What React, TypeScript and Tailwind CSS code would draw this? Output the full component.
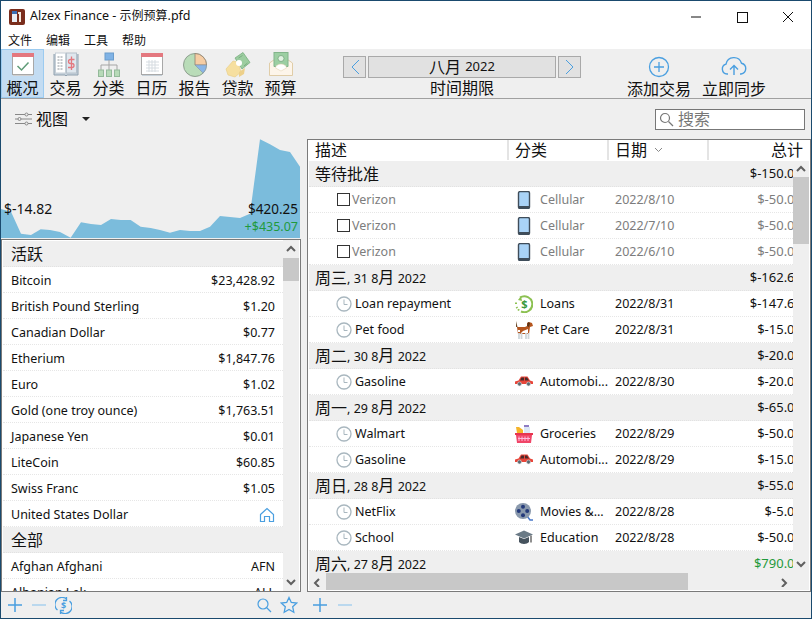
import type { ReactNode } from 'react'

const font = { fontFamily: '"Noto Sans", "Noto Sans CJK SC", sans-serif' }

function ToolIcon({ name }: { name: string }) {
  if (name === 'overview') return (
    <svg width="24" height="25" viewBox="0 0 24 25">
      <rect x="1.500" y="1.500" width="21" height="21" fill="#fff" stroke="#a8a8a8" />
      <path d="M2 23.500h20" stroke="#d0d0d0" />
      <rect x="1" y="1" width="22" height="4" fill="#e4787f" />
      <path d="M6.500 14l4 4 7-7.500" fill="none" stroke="#5f9c78" strokeWidth="1.500" />
    </svg>
  )
  if (name === 'tx') return (
    <svg width="26" height="26" viewBox="0 0 26 26">
      <path d="M1 2v21h11l1 1 1-1h11V2" fill="#c7d3dd" stroke="#8fa0ae" />
      <rect x="2.500" y="1" width="10" height="20" fill="#fff" stroke="#c5ced6" />
      <rect x="13.500" y="1" width="10" height="20" fill="#dfe7ee" stroke="#b5c0ca" />
      <path d="M4.500 5h6M4.500 8h6M4.500 11h6M4.500 14h6M4.500 17h6" stroke="#8a9299" strokeDasharray="2 1" />
      <path d="M21.500 7.500h-4a1.800 1.800 0 0 0 0 4h1.500a1.800 1.800 0 0 1 0 4h-4M18.500 4.500v13.500" fill="none" stroke="#e4787f" strokeWidth="1.300" />
    </svg>
  )
  if (name === 'cat') return (
    <svg width="26" height="26" viewBox="0 0 26 26">
      <rect x="9" y="1" width="8.500" height="7" fill="#7fb2e5" stroke="#6a9ccc" />
      <path d="M13 8v10M5 18v-5h16v5" fill="none" stroke="#a5a5a5" />
      <rect x="2.500" y="18" width="5" height="6.500" fill="#b7dab8" stroke="#93b99a" />
      <rect x="10.500" y="18" width="5" height="6.500" fill="#b7dab8" stroke="#93b99a" />
      <rect x="18.500" y="18" width="5" height="6.500" fill="#b7dab8" stroke="#93b99a" />
    </svg>
  )
  if (name === 'cal') return (
    <svg width="24" height="25" viewBox="0 0 24 25">
      <rect x="1.500" y="1.500" width="21" height="21" fill="#fff" stroke="#a8a8a8" />
      <path d="M2 23.500h20" stroke="#c5d0d8" />
      <rect x="1" y="1" width="22" height="4" fill="#e4787f" />
      <path d="M6 10h13M6 13h13M6 16h13M6 19h13M9 8v12M12 8v12M15 8v12" stroke="#d5dbe0" />
    </svg>
  )
  if (name === 'pie') return (
    <svg width="26" height="26" viewBox="0 0 26 26">
      <circle cx="13" cy="13" r="11.500" fill="#b9dcb8" stroke="#8f9f90" />
      <path d="M13 13V1.500A11.500 11.500 0 0 1 24.500 13z" fill="#f6cda4" stroke="#8f7f70" strokeWidth=".8" />
      <path d="M13 13h11.500a11.500 11.500 0 0 1-3.400 8.100z" fill="#8ab6e8" stroke="#8a9aa8" strokeWidth=".7" />
    </svg>
  )
  if (name === 'loan') return (
    <svg width="26" height="26" viewBox="0 0 26 26">
      <path d="M10 6l8-5.500 7 10-8 6.500z" fill="#9ccda0" stroke="#79ad80" strokeWidth=".8" />
      <path d="M13.500 6l4-2.500M19 14l3.500-3" stroke="#79ad80" />
      <path d="M1 17l7-8 5 1 3 10-6 5-7-2z" fill="#f6df9f" stroke="#e6cb83" strokeWidth=".6" />
      <circle cx="14" cy="11" r="3" fill="#fff" />
      <path d="M14 20l6-4-1 6-5 3z" fill="#edd08a" />
    </svg>
  )
  return (
    <svg width="26" height="25" viewBox="0 0 26 25">
      <path d="M1.500 11L13 3l11.500 8v12.500h-23z" fill="#fdf5ea" stroke="#e0cda8" />
      <rect x="6" y="0.500" width="14" height="14" fill="#9ccfa3" stroke="#82b48b" />
      <circle cx="13" cy="6.500" r="3" fill="#e2f2e3" stroke="#6d9d76" strokeWidth=".7" />
      <path d="M2 12l7 5h8l7-5v11H2z" fill="#fdf5ea" />
      <path d="M7.500 16a5.500 4 0 0 1 11 0l-5.500 3z" fill="#fff" stroke="#e0cda8" strokeWidth=".5" />
    </svg>
  )
}

const tools = [
  ['overview', '概况'], ['tx', '交易'], ['cat', '分类'], ['cal', '日历'],
  ['pie', '报告'], ['loan', '贷款'], ['budget', '预算'],
]

const currencies = [
  ['Bitcoin', '$23,428.92'], ['British Pound Sterling', '$1.20'], ['Canadian Dollar', '$0.77'],
  ['Etherium', '$1,847.76'], ['Euro', '$1.02'], ['Gold (one troy ounce)', '$1,763.51'],
  ['Japanese Yen', '$0.01'], ['LiteCoin', '$60.85'], ['Swiss Franc', '$1.05'],
]

function Arrow({ dir }: { dir: 'up' | 'down' | 'left' | 'right' }) {
  const d = { up: 'M1 6l4-4 4 4', down: 'M1 2l4 4 4-4', left: 'M6 1L2 5l4 4', right: 'M3 1l4 4-4 4' }[dir]
  return (
    <svg width="10" height="10" viewBox="0 0 10 8" className="shrink-0">
      <path d={d} fill="none" stroke="#606060" strokeWidth="2" />
    </svg>
  )
}

function Clock() {
  return (
    <svg width="16" height="16" viewBox="0 0 16 16" className="shrink-0">
      <circle cx="8" cy="8" r="7" fill="#fff" stroke="#a9b7bf" strokeWidth="1.300" />
      <path d="M8 3.500V8.500h3.500" fill="none" stroke="#a9b7bf" />
    </svg>
  )
}

function CatIcon({ name }: { name: string }) {
  if (name === 'Cellular') return (
    <svg width="18" height="18" viewBox="0 0 18 18">
      <rect x="3.500" y="0.500" width="11" height="17" rx="1.500" fill="#a9d3f7" stroke="#3f4d5a" strokeWidth="1.400" />
      <path d="M4 16h10" stroke="#3f4d5a" strokeWidth="2" />
    </svg>
  )
  if (name === 'Loans') return (
    <svg width="18" height="18" viewBox="0 0 18 18">
      <path d="M5 2.500A8 8 0 1 1 6 16.500" fill="none" stroke="#8cc152" strokeWidth="2" />
      <path d="M4 15.500L1.500 12M1 9V6.500" fill="none" stroke="#8cc152" strokeWidth="2" strokeDasharray="1.500 1.500" />
      <path d="M3 5l3-4 1 5z" fill="#8cc152" />
      <text x="9.500" y="13" textAnchor="middle" fontSize="11" fontWeight="700" fill="#3a9a3e">$</text>
    </svg>
  )
  if (name === 'Pet Care') return (
    <svg width="18" height="18" viewBox="0 0 18 18">
      <path d="M1 0l1.500 6H1z" fill="#6a4a2a" />
      <path d="M2 6h8l2-1V2l2-1 3 1 1 3-3 1-1 7H3z" fill="#b5561f" />
      <path d="M3 9h2v2H3zM8 10l5-2v4H6z" fill="#fff" />
      <path d="M13 1l2 1-1 4-2-1z" fill="#5a3418" />
      <path d="M4 12v6M6.500 12v6M11 12v6M13.500 12v6" stroke="#cfd6da" strokeWidth="1.800" />
    </svg>
  )
  if (name === 'Automobi...') return (
    <svg width="18" height="18" viewBox="0 0 18 18">
      <path d="M0 11V8.500l3.500-1L6 3.500h6.500l2.500 4 3 1V11z" fill="#e8463a" />
      <path d="M6.500 4.500h2.500v3H5zM10 4.500h2l2 3h-4z" fill="#4a2a2a" />
      <circle cx="4.500" cy="11" r="2" fill="#5a6a72" stroke="#ddd" strokeWidth=".6" />
      <circle cx="13.500" cy="11" r="2" fill="#5a6a72" stroke="#ddd" strokeWidth=".6" />
    </svg>
  )
  if (name === 'Groceries') return (
    <svg width="18" height="18" viewBox="0 0 18 18">
      <rect x="9" y="0" width="5" height="2" fill="#8e7cc3" />
      <rect x="9" y="2" width="6" height="6" fill="#dce6f4" />
      <path d="M1 2h3l4 3v3H2z" fill="#f5b42a" />
      <rect x="0" y="8" width="18" height="2" fill="#e8344f" />
      <path d="M1 10h16l-1 8H2z" fill="#f04668" />
      <path d="M4 11.500v4.500M7 11.500v4.500M10 11.500v4.500M13 11.500v4.500M3 13.500h12" stroke="#fbd" />
    </svg>
  )
  if (name === 'Movies &...') return (
    <svg width="18" height="18" viewBox="0 0 18 18">
      <path d="M12 13l3 4h3" fill="none" stroke="#4a78c8" strokeWidth="1.500" />
      <circle cx="8" cy="8" r="8" fill="#8a99ad" />
      <circle cx="8" cy="3.800" r="2" fill="#243a7a" />
      <circle cx="8" cy="12.200" r="2" fill="#243a7a" />
      <circle cx="3.800" cy="8" r="2" fill="#243a7a" />
      <circle cx="12.200" cy="8" r="2" fill="#243a7a" />
    </svg>
  )
  return (
    <svg width="18" height="18" viewBox="0 0 18 18">
      <path d="M4 8v5c2 2.500 8 2.500 10 0V8l-5 2z" fill="#46535e" />
      <path d="M0 5.500l9-4 9 4-9 4z" fill="#6a7a86" />
      <path d="M16 6.500v7" stroke="#6a6a6a" strokeWidth="1.500" />
    </svg>
  )
}

type Row =
  | { group: string; day?: string; year?: string; total: string; green?: boolean }
  | { desc: string; cat: string; date: string; amount: string; pending?: boolean }

const rows: Row[] = [
  { group: '等待批准', total: '$-150.00' },
  { desc: 'Verizon', cat: 'Cellular', date: '2022/8/10', amount: '$-50.00', pending: true },
  { desc: 'Verizon', cat: 'Cellular', date: '2022/7/10', amount: '$-50.00', pending: true },
  { desc: 'Verizon', cat: 'Cellular', date: '2022/6/10', amount: '$-50.00', pending: true },
  { group: '周三', day: '31', year: '2022', total: '$-162.60' },
  { desc: 'Loan repayment', cat: 'Loans', date: '2022/8/31', amount: '$-147.60' },
  { desc: 'Pet food', cat: 'Pet Care', date: '2022/8/31', amount: '$-15.00' },
  { group: '周二', day: '30', year: '2022', total: '$-20.00' },
  { desc: 'Gasoline', cat: 'Automobi...', date: '2022/8/30', amount: '$-20.00' },
  { group: '周一', day: '29', year: '2022', total: '$-65.00' },
  { desc: 'Walmart', cat: 'Groceries', date: '2022/8/29', amount: '$-50.00' },
  { desc: 'Gasoline', cat: 'Automobi...', date: '2022/8/29', amount: '$-15.00' },
  { group: '周日', day: '28', year: '2022', total: '$-55.00' },
  { desc: 'NetFlix', cat: 'Movies &...', date: '2022/8/28', amount: '$-5.00' },
  { desc: 'School', cat: 'Education', date: '2022/8/28', amount: '$-50.00' },
  { group: '周六', day: '27', year: '2022', total: '$790.00', green: true },
]

function Amount({ children, className }: { children: ReactNode; className?: string }) {
  return (
    <div className="flex-1 overflow-hidden flex justify-end text-[13px]">
      <span className={`-mr-[9px] shrink-0 ${className ?? ''}`}>{children}</span>
    </div>
  )
}

function TxRow({ row }: { row: Row }) {
  if ('group' in row) {
    return (
      <div className="h-[26px] bg-[#efefef] border-b border-dotted border-[#e2e2e2] flex items-center pl-[6px] text-[12.500px] text-[#111]">
        <span className="text-[16px]">{row.group}</span>
        {row.day && (
          <span className="whitespace-pre pb-[2px]">
            , {row.day} 8<span className="text-[16px]">月</span> {row.year}
          </span>
        )}
        <Amount className={row.green ? 'text-[#1f9a3c]' : ''}>{row.total}</Amount>
      </div>
    )
  }
  return (
    <div className={`h-[26px] border-b border-dotted border-[#e6e6e6] flex items-center text-[12.500px] ${row.pending ? 'text-[#7d7d7d]' : 'text-[#111]'}`}>
      <div className="w-[199px] flex items-center pl-[27px] shrink-0">
        {row.pending
          ? <div className="w-[13px] h-[13px] ml-[1px] mr-[2px] border border-[#333] shrink-0" />
          : <div className="mr-[3px]"><Clock /></div>}
        <span className="pt-[2px]">{row.desc}</span>
      </div>
      <div className="w-[100px] flex items-center shrink-0 pl-[7px]">
        <div className="w-[18px] h-[18px] shrink-0"><CatIcon name={row.cat} /></div>
        <span className="ml-[7px] pt-[2px]">{row.cat}</span>
      </div>
      <div className="w-[100px] pl-[7px] pt-[2px] shrink-0">{row.date}</div>
      <Amount>{row.amount}</Amount>
    </div>
  )
}

function Plus() {
  return (
    <svg width="16" height="16" viewBox="0 0 16 16"><path d="M8 1v14M1 8h14" stroke="#4a9fe0" strokeWidth="1.500" /></svg>
  )
}

function Minus() {
  return (
    <svg width="16" height="16" viewBox="0 0 16 16"><path d="M1 8h14" stroke="#a9d0ee" strokeWidth="1.500" /></svg>
  )
}

export default function App() {
  return (
    <div style={font} className="w-[812px] h-[619px] flex flex-col overflow-hidden border border-[#1a4a6e] bg-[#efefef] text-[#111]">
      <div className="h-[31px] bg-white flex items-center shrink-0">
        <svg width="16" height="16" viewBox="0 0 16 16" className="ml-[8px]">
          <rect width="16" height="16" rx="2" fill="#7a2d1c" />
          <rect x="3" y="2" width="5" height="11" fill="#e8eef5" />
          <rect x="3" y="2" width="5" height="3" fill="#3a6fb5" />
          <path d="M9 3h3v10h-2V5H9z" fill="#f4e8dc" />
        </svg>
        <span className="ml-[5px] text-[12.500px]">Alzex Finance - <span className="text-[12px]">示例预算</span>.pfd</span>
        <div className="ml-auto flex items-center">
          <svg width="46" height="30" viewBox="0 0 46 30"><path d="M18 15h10" stroke="#111" /></svg>
          <svg width="46" height="30" viewBox="0 0 46 30"><rect x="18.500" y="10.500" width="10" height="10" fill="none" stroke="#111" /></svg>
          <svg width="46" height="30" viewBox="0 0 46 30"><path d="M18 10l10 10M28 10L18 20" stroke="#111" /></svg>
        </div>
      </div>

      <div className="h-[17px] bg-white flex items-center shrink-0 text-[12px] pl-[7px] gap-[14px] leading-none">
        <span>文件</span><span>编辑</span><span>工具</span><span>帮助</span>
      </div>

      <div className="h-[50px] shrink-0 border-b border-[#a0a0a0] flex">
        <div className="flex">
          {tools.map(([icon, label], i) => (
            <div key={label} className={`w-[43px] flex flex-col items-center border ${i === 0 ? 'bg-[#c3dcf2] border-[#9ccbf0]' : 'border-transparent'}`}>
              <div className="h-[30px] flex items-center justify-center"><ToolIcon name={icon} /></div>
              <span className="text-[16px] leading-[18px] whitespace-nowrap">{label}</span>
            </div>
          ))}
        </div>
        <div className="ml-[41px] w-[238px] flex flex-col items-center pt-[7px]">
          <div className="flex gap-[2px]">
            <div className="w-[23px] h-[22px] border border-[#a9a9a9] bg-[#e1e1e1] flex items-center justify-center">
              <svg width="12" height="18" viewBox="0 0 12 18"><path d="M10 2L3 9l7 7" fill="none" stroke="#4a9fe0" /></svg>
            </div>
            <div className="w-[188px] h-[22px] border border-[#a9a9a9] bg-[#e1e1e1] flex items-center justify-center text-[13px]">
              <span className="text-[16px] mr-[4px]">八月</span>2022
            </div>
            <div className="w-[23px] h-[22px] border border-[#a9a9a9] bg-[#e1e1e1] flex items-center justify-center">
              <svg width="12" height="18" viewBox="0 0 12 18"><path d="M2 2l7 7-7 7" fill="none" stroke="#4a9fe0" /></svg>
            </div>
          </div>
          <span className="text-[16px] leading-[18px] mt-[1px]">时间期限</span>
        </div>
        <div className="ml-[43px] w-[70px] flex flex-col items-center pt-[7px]">
          <svg width="22" height="22" viewBox="0 0 22 22">
            <circle cx="11" cy="11" r="9.500" fill="none" stroke="#4a9fe0" strokeWidth="1.300" />
            <path d="M11 6v10M6 11h10" stroke="#4a9fe0" strokeWidth="1.300" />
          </svg>
          <span className="text-[16px] leading-[18px] mt-[2px] whitespace-nowrap">添加交易</span>
        </div>
        <div className="ml-[5px] w-[70px] flex flex-col items-center pt-[7px]">
          <svg width="26" height="22" viewBox="0 0 26 22">
            <path d="M7 18H6a5 5 0 0 1-1-9.800 8 8 0 0 1 15.500-1A5.500 5.500 0 0 1 20 18h-1" fill="none" stroke="#4a9fe0" strokeWidth="1.400" />
            <path d="M13 19V10M9 13.500L13 9.500l4 4" fill="none" stroke="#4a9fe0" strokeWidth="1.400" />
          </svg>
          <span className="text-[16px] leading-[18px] mt-[2px] whitespace-nowrap">立即同步</span>
        </div>
      </div>

      <div className="h-[40px] shrink-0 flex items-center">
        <svg width="17" height="14" viewBox="0 0 17 14" className="ml-[14px]">
          <path d="M0 2.500h10M13 2.500h4M0 7h3M6 7h11M0 11.500h10M13 11.500h4" stroke="#888" />
          <circle cx="11.500" cy="2.500" r="1.500" fill="none" stroke="#888" />
          <circle cx="4.500" cy="7" r="1.500" fill="none" stroke="#888" />
          <circle cx="11.500" cy="11.500" r="1.500" fill="none" stroke="#888" />
        </svg>
        <span className="ml-[4px] text-[16px]">视图</span>
        <div className="ml-[14px] w-0 h-0 border-x-[4px] border-x-transparent border-t-[4px] border-t-[#222]" />
        <div className="ml-auto mr-[6px] w-[150px] h-[21px] border border-[#777] bg-white flex items-center pl-[3px]">
          <svg width="15" height="15" viewBox="0 0 15 15">
            <circle cx="6" cy="6" r="4.500" fill="none" stroke="#777" strokeWidth="1.200" />
            <path d="M9.500 9.500L14 14" stroke="#777" strokeWidth="1.300" />
          </svg>
          <span className="ml-[4px] text-[16px] text-[#777] leading-none">搜索</span>
        </div>
      </div>

      <div className="flex-1 min-h-0 flex">
        <div className="w-[300px] shrink-0 flex flex-col">
          <div className="relative h-[100px] shrink-0">
            <svg width="299" height="99" viewBox="3 12 897 297" preserveAspectRatio="none" className="block">
              <path
                fill="#7bbcdc"
                d="M3 222L33 230 63 296 93 300 122 283 150 285 180 291 212 308 243 262 273 267 303 270 333 252 362 255 392 255 422 275 452 279 480 285 510 293 540 285 570 288 600 288 630 275 660 243 690 246 720 249 750 236 780 13 810 28 840 45 870 51 900 95V309H3Z"
              />
            </svg>
            <span className="absolute left-[3px] top-[60px] text-[14px] leading-[20px]">$-14.82</span>
            <span className="absolute right-[3px] top-[60px] text-[13.500px] leading-[20px]">$420.25</span>
            <span className="absolute right-[3px] top-[80px] text-[12.500px] leading-[16px] text-[#1f9a3c]">+$435.07</span>
          </div>
          <div className="flex-1 min-h-0 border border-[#7a7a7a] bg-white flex">
            <div className="flex-1 min-w-0 overflow-hidden pl-[1px] pt-[1px] text-[12.500px]">
              <div className="h-[26px] bg-[#efefef] border-b border-dotted border-[#e2e2e2] flex items-center pl-[8px] text-[16px]">活跃</div>
              {currencies.map(([name, value]) => (
                <div key={name} className="h-[26px] pt-[3px] border-b border-dotted border-[#e6e6e6] flex items-center justify-between px-[8px]">
                  <span>{name}</span><span>{value}</span>
                </div>
              ))}
              <div className="h-[26px] pt-[3px] border-b border-dotted border-[#e6e6e6] flex items-center justify-between px-[8px]">
                <span>United States Dollar</span>
                <svg width="16" height="16" viewBox="0 0 16 16">
                  <path d="M1.500 7.500L8 1.500l6.500 6V14.500H10.500V9.500h-5v5H1.500z" fill="none" stroke="#4a9fe0" strokeWidth="1.200" />
                </svg>
              </div>
              <div className="h-[26px] bg-[#efefef] border-b border-dotted border-[#e2e2e2] flex items-center pl-[8px] text-[16px]">全部</div>
              <div className="h-[26px] pt-[3px] border-b border-dotted border-[#e6e6e6] flex items-center justify-between px-[8px]">
                <span>Afghan Afghani</span><span>AFN</span>
              </div>
              <div className="h-[26px] pt-[3px] flex items-center justify-between px-[8px]">
                <span>Albanian Lek</span><span>ALL</span>
              </div>
            </div>
            <div className="w-[16px] mr-[1px] shrink-0 bg-[#efefef] flex flex-col items-center">
              <div className="h-[18px] flex items-center justify-center"><Arrow dir="up" /></div>
              <div className="h-[23px] w-full bg-[#c8c8c8]" />
              <div className="mt-auto h-[18px] flex items-center justify-center"><Arrow dir="down" /></div>
            </div>
          </div>
          <div className="h-[26px] shrink-0 flex items-center pl-[6px] pr-[3px] gap-[8px]">
            <Plus /><Minus />
            <svg width="17" height="17" viewBox="0 0 17 17">
              <path d="M2.500 13A7 7 0 0 1 11.500 2M14.500 4a7 7 0 0 1-9 11M11.500 0v3.500H8M5.500 17v-3.500H9" fill="none" stroke="#4a9fe0" strokeWidth="1.300" />
              <text x="8.500" y="12" textAnchor="middle" fontSize="9" fontWeight="700" fill="#4a9fe0">$</text>
            </svg>
            <svg width="15" height="15" viewBox="0 0 15 15" className="ml-auto">
              <circle cx="6" cy="6" r="5" fill="none" stroke="#4a9fe0" strokeWidth="1.200" />
              <path d="M9.500 9.500L14 14" stroke="#4a9fe0" strokeWidth="1.300" />
            </svg>
            <svg width="18" height="18" viewBox="0 0 18 18">
              <path d="M9 1.500l2.300 5 5.400.6-4 3.700 1.100 5.400L9 13.500l-4.800 2.700 1.100-5.400-4-3.700 5.400-.6z" fill="none" stroke="#4a9fe0" strokeWidth="1.300" />
            </svg>
          </div>
        </div>

        <div className="ml-[6px] flex-1 min-w-0 flex flex-col">
          <div className="flex-1 min-h-0 border border-[#7a7a7a] bg-white flex flex-col">
            <div className="h-[21px] shrink-0 flex items-center text-[16px] ml-[1px] pb-[1px]">
              <div className="w-[200px] pl-[6px] border-r-2 border-[#e4e4e4] h-full flex items-center">描述</div>
              <div className="w-[100px] pl-[6px] border-r-2 border-[#e4e4e4] h-full flex items-center">分类</div>
              <div className="w-[100px] pl-[6px] border-r-2 border-[#e4e4e4] h-full flex items-center">
                日期
                <svg width="9" height="6" viewBox="0 0 9 6" className="ml-[7px]"><path d="M1 1l3.500 3.500L8 1" fill="none" stroke="#888" /></svg>
              </div>
              <div className="flex-1 pr-[7px] text-right">总计</div>
            </div>
            <div className="flex-1 min-h-0 flex">
              <div className="flex-1 min-w-0 flex flex-col ml-[1px]">
                <div className="flex-1 min-h-0 overflow-hidden">
                  {rows.map((row, i) => <TxRow key={i} row={row} />)}
                </div>
              </div>
              <div className="w-[16px] mr-[1px] shrink-0 bg-[#efefef] flex flex-col items-center">
                <div className="h-[16px] flex items-center justify-center"><Arrow dir="up" /></div>
                <div className="h-[67px] w-full bg-[#c8c8c8]" />
                <div className="mt-auto h-[18px] flex items-center justify-center"><Arrow dir="down" /></div>
              </div>
            </div>
            <div className="h-[17px] shrink-0 mx-[1px] mb-[1px] bg-[#efefef] flex items-center">
              <div className="w-[17px] flex justify-center"><Arrow dir="left" /></div>
              <div className="w-[362px] h-full bg-[#c8c8c8]" />
              <div className="ml-[87px] w-[17px] flex justify-center"><Arrow dir="right" /></div>
            </div>
          </div>
          <div className="h-[26px] shrink-0 flex items-center pl-[5px] gap-[9px]">
            <Plus /><Minus />
          </div>
        </div>
      </div>
    </div>
  )
}
